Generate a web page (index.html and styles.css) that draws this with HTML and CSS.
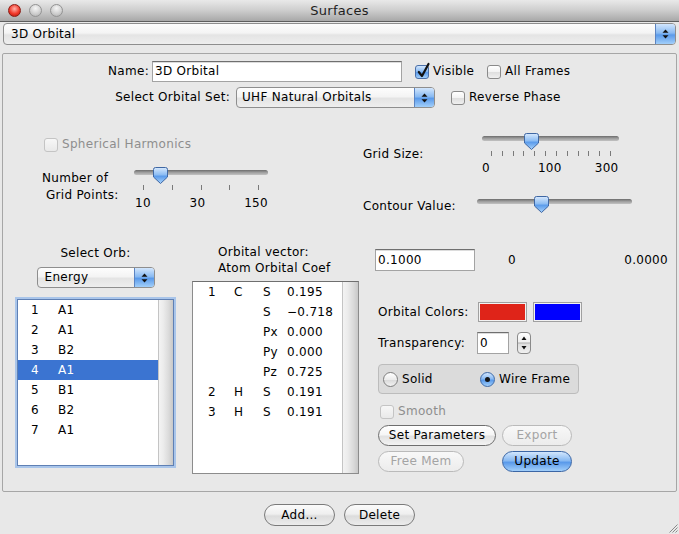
FILE: index.html
```html
<!DOCTYPE html>
<html>
<head>
<meta charset="utf-8">
<title>Surfaces</title>
<link rel="stylesheet" href="styles.css">
</head>
<body>
<svg class="defs" width="0" height="0" aria-hidden="true">
  <defs>
    <linearGradient id="aqua" x1="0" y1="0" x2="0" y2="1">
      <stop offset="0" stop-color="#d8e9fd"/>
      <stop offset="0.45" stop-color="#8dbdf3"/>
      <stop offset="0.55" stop-color="#5c9ceb"/>
      <stop offset="1" stop-color="#a9d3fb"/>
    </linearGradient>
  </defs>
</svg>

<div class="titlebar">
  <div class="lights"><span class="light red"></span><span class="light"></span><span class="light"></span></div>
  <div class="title">Surfaces</div>
  <div></div>
</div>

<div class="popup top-popup">
  <span class="popup-text">3D Orbital</span>
  <span class="popup-arrows"><svg width="7" height="12" viewBox="0 0 7 12"><path d="M3.5 1.5 L6.5 4.8 H0.5Z M0.5 7.2 H6.5 L3.5 10.5Z" fill="#111"/></svg></span>
</div>

<div class="panel">
  <div class="row row-name">
    <div class="lbl-name">Name:</div>
    <div class="field field-name">3D Orbital</div>
    <div class="chk-item chk-visible"><span class="chk checked"><svg width="14" height="17" viewBox="0 0 14 17"><path d="M2.8 10 L6 14 L12.5 2" fill="none" stroke="#111" stroke-width="2.2" stroke-linecap="round" stroke-linejoin="round"/></svg></span><span>Visible</span></div>
    <div class="chk-item"><span class="chk"></span><span>All Frames</span></div>
  </div>

  <div class="row row-set">
    <div class="lbl-set">Select Orbital Set:</div>
    <div class="popup popup-set">
      <span class="popup-text">UHF Natural Orbitals</span>
      <span class="popup-arrows"><svg width="7" height="12" viewBox="0 0 7 12"><path d="M3.5 1.5 L6.5 4.8 H0.5Z M0.5 7.2 H6.5 L3.5 10.5Z" fill="#111"/></svg></span>
    </div>
    <div class="chk-item chk-reverse"><span class="chk"></span><span>Reverse Phase</span></div>
  </div>

  <div class="mid">
    <div class="mid-left">
      <div class="chk-item sph"><span class="chk disabled"></span><span class="dis">Spherical Harmonics</span></div>
      <div class="gp">
        <div class="gp-label"><div>Number of</div><div class="gp-l2">Grid Points:</div></div>
        <div class="sl-gp">
          <div class="slider"><div class="track"></div><svg class="thumb" style="left:19px" width="15" height="17" viewBox="0 0 15 17"><path d="M2.5 0.5 H12.5 Q14.5 0.5 14.5 2.5 V10 L7.5 16.5 L0.5 10 V2.5 Q0.5 0.5 2.5 0.5 Z" fill="url(#aqua)" stroke="#3f67a3"/></svg></div>
          <div class="ticks ticks-gp"><i></i><i></i><i></i><i></i><i></i></div>
          <div class="tick-labels tl-gp"><span>10</span><span>30</span><span>150</span></div>
        </div>
      </div>
    </div>
    <div class="mid-right">
      <div class="gs-row">
        <div class="gs-label">Grid Size:</div>
        <div class="sl-gs">
          <div class="slider"><div class="track"></div><svg class="thumb" style="left:42px" width="15" height="17" viewBox="0 0 15 17"><path d="M2.5 0.5 H12.5 Q14.5 0.5 14.5 2.5 V10 L7.5 16.5 L0.5 10 V2.5 Q0.5 0.5 2.5 0.5 Z" fill="url(#aqua)" stroke="#3f67a3"/></svg></div>
          <div class="ticks ticks-gs"><i></i><i></i><i></i><i></i><i></i><i></i><i></i><i></i><i></i><i></i><i></i><i></i></div>
          <div class="tick-labels tl-gs"><span>0</span><span class="t100">100</span><span class="t300">300</span></div>
        </div>
      </div>
      <div class="ct-row">
        <div class="ct-label">Contour Value:</div>
        <div class="sl-ct">
          <div class="slider"><div class="track"></div><svg class="thumb" style="left:57px" width="15" height="17" viewBox="0 0 15 17"><path d="M2.5 0.5 H12.5 Q14.5 0.5 14.5 2.5 V10 L7.5 16.5 L0.5 10 V2.5 Q0.5 0.5 2.5 0.5 Z" fill="url(#aqua)" stroke="#3f67a3"/></svg></div>
        </div>
      </div>
    </div>
  </div>

  <div class="bot">
    <div class="col1">
      <div class="so-label">Select Orb:</div>
      <div class="popup popup-orb">
        <span class="popup-text">Energy</span>
        <span class="popup-arrows"><svg width="7" height="12" viewBox="0 0 7 12"><path d="M3.5 1.5 L6.5 4.8 H0.5Z M0.5 7.2 H6.5 L3.5 10.5Z" fill="#111"/></svg></span>
      </div>
      <div class="list">
        <div class="list-body">
          <div class="lrow"><span class="lnum">1</span><span>A1</span></div>
          <div class="lrow"><span class="lnum">2</span><span>A1</span></div>
          <div class="lrow"><span class="lnum">3</span><span>B2</span></div>
          <div class="lrow sel"><span class="lnum">4</span><span>A1</span></div>
          <div class="lrow"><span class="lnum">5</span><span>B1</span></div>
          <div class="lrow"><span class="lnum">6</span><span>B2</span></div>
          <div class="lrow"><span class="lnum">7</span><span>A1</span></div>
        </div>
        <div class="scroll"></div>
      </div>
    </div>

    <div class="col2">
      <div class="ov-label"><div>Orbital vector:</div><div>Atom Orbital Coef</div></div>
      <div class="coef">
        <div class="list-body">
          <div class="crow"><span>1</span><span>C</span><span>S</span><span>0.195</span></div>
          <div class="crow"><span></span><span></span><span>S</span><span>&minus;0.718</span></div>
          <div class="crow"><span></span><span></span><span>Px</span><span>0.000</span></div>
          <div class="crow"><span></span><span></span><span>Py</span><span>0.000</span></div>
          <div class="crow"><span></span><span></span><span>Pz</span><span>0.725</span></div>
          <div class="crow"><span>2</span><span>H</span><span>S</span><span>0.191</span></div>
          <div class="crow"><span>3</span><span>H</span><span>S</span><span>0.191</span></div>
        </div>
        <div class="scroll scroll-c"></div>
      </div>
    </div>

    <div class="col3">
      <div class="val-row">
        <div class="field field-val">0.1000</div>
        <span class="zero">0</span>
        <span class="max">0.0000</span>
      </div>
      <div class="oc-row">
        <span class="oc-label">Orbital Colors:</span>
        <span class="swatch sw-red"></span>
        <span class="swatch sw-blue"></span>
      </div>
      <div class="tr-row">
        <span class="tr-label">Transparency:</span>
        <div class="field field-tr">0</div>
        <span class="stepper"><svg width="12" height="20" viewBox="0 0 12 20"><path d="M6 3.5 L8.5 7 H3.5Z M3.5 13 H8.5 L6 16.5Z" fill="#111"/><path d="M0 10 H12" stroke="#b0b0b0" stroke-width="1"/></svg></span>
      </div>
      <div class="radio-box">
        <div class="radio-item ri-solid"><span class="radio"></span><span>Solid</span></div>
        <div class="radio-item"><span class="radio on"><span class="dot"></span></span><span>Wire Frame</span></div>
      </div>
      <div class="chk-item smooth"><span class="chk disabled"></span><span class="dis">Smooth</span></div>
      <div class="btn-row">
        <button class="btn b-setp">Set Parameters</button>
        <button class="btn disabled b-export">Export</button>
      </div>
      <div class="btn-row btn-row2">
        <button class="btn disabled b-free">Free Mem</button>
        <button class="btn b-update">Update</button>
      </div>
    </div>
  </div>
</div>

<div class="bottom-buttons">
  <button class="btn b-bottom">Add...</button>
  <button class="btn b-bottom">Delete</button>
</div>

<svg class="grip" width="10" height="10" viewBox="0 0 10 10"><path d="M9.5 1.5 L1.5 9.5 M9.5 4.5 L4.5 9.5 M9.5 7.5 L7.5 9.5" stroke="#8a8a8a" stroke-width="1"/></svg>
</body>
</html>
```

FILE: styles.css
```css
* { box-sizing: border-box; margin: 0; padding: 0; }
html, body { margin: 0; padding: 0; }
body {
  width: 679px; height: 534px; overflow: hidden;
  background: #e8e8e8;
  font-family: "DejaVu Sans", "Noto Sans", sans-serif;
  font-size: 12px; line-height: 15px; color: #000;
  letter-spacing: 0.3px;
  position: relative;
}
.defs { position: absolute; width: 0; height: 0; }

.titlebar {
  height: 22px;
  display: grid; grid-template-columns: 1fr auto 1fr; align-items: center;
  background: linear-gradient(#e9e9e9, #d0d0d0 45%, #a8a8a8);
  border-bottom: 1px solid #5e5e5e;
}
.lights { display: flex; gap: 8px; padding-left: 8px; }
.light {
  width: 13px; height: 13px; border-radius: 50%;
  background: radial-gradient(circle at 50% 30%, #f6f6f6, #cdcdcd 60%, #aaaaaa);
  border: 1px solid #939393;
}
.light.red {
  background: radial-gradient(circle at 50% 35%, #ffb3aa, #f2392b 55%, #a8140a);
  border-color: #8c1c14;
}
.title { font-size: 13px; color: #1e1e1e; }

.popup {
  display: flex; align-items: stretch; height: 22px;
  border: 1px solid #8e8e8e; border-radius: 4px; overflow: hidden;
  background: linear-gradient(#fdfdfd, #f4f4f4 45%, #e4e4e4 55%, #eeeeee);
}
.popup-text { flex: 1; display: flex; align-items: center; padding-left: 7px; }
.popup-arrows {
  width: 20px; flex: none;
  border-left: 1px solid #5b84c2;
  background: linear-gradient(#d2e6fd, #89baf2 45%, #5a9aea 55%, #a2cffa);
  display: flex; align-items: center; justify-content: center;
}
.top-popup { margin: 1px 3px 0 3px; }

.panel {
  margin: 8px 2px 0 2px; height: 439px;
  border: 1px solid #a6a6a6; border-radius: 2px;
}

.row { display: flex; align-items: center; }
.row-name { margin-top: 7px; height: 21px; }
.lbl-name { width: 146px; text-align: right; }
.field {
  background: #fff; height: 21px;
  border: 1px solid #a3a3a3; border-top-color: #6f6f6f;
  box-shadow: inset 0 1px 0 #dcdcdc;
  display: flex; align-items: center; padding-left: 2px;
}
.field-name { width: 250px; margin-left: 3px; }
.chk-item { display: flex; align-items: center; gap: 4px; }
.chk-visible { margin-left: 13px; width: 72px; }
.chk {
  width: 14px; height: 14px; flex: none; position: relative;
  border: 1px solid #8a8a8a; border-radius: 3px;
  background: linear-gradient(#ffffff, #f2f2f2 50%, #dedede 51%, #efefef);
}
.chk.checked {
  border-color: #4a6fa8;
  background: linear-gradient(#d2e6fd, #89baf2 45%, #5a9aea 55%, #a2cffa);
}
.chk.checked svg { position: absolute; left: 0; top: -4px; }
.chk.disabled { border-color: #c4c4c4; background: linear-gradient(#f7f7f7, #e9e9e9); }
.dis { color: #8e8e8e; }

.row-set { margin-top: 5px; height: 21px; }
.lbl-set { width: 227px; text-align: right; }
.popup-set { width: 199px; height: 21px; margin-left: 6px; }
.popup-set .popup-text { padding-left: 5px; }
.chk-reverse { margin-left: 16px; }

.mid { display: flex; height: 132px; }
.mid-left { width: 359px; }
.sph { margin: 29px 0 0 41px; height: 15px; }
.gp { display: flex; margin-top: 15px; }
.gp-label { width: 92px; margin-left: 39px; margin-top: 3px; line-height: 17px; }
.gp-l2 { padding-left: 4px; }
.sl-gp { width: 134px; }
.slider { position: relative; height: 18px; }
.track {
  position: absolute; left: 0; right: 0; top: 3px; height: 5px; border-radius: 3px;
  background: linear-gradient(#6c6c6c, #9f9f9f 50%, #c2c2c2);
}
.thumb { position: absolute; top: 0; }
.ticks { display: flex; justify-content: space-between; height: 5px; }
.ticks i { display: block; width: 1px; background: #7a7a7a; }
.ticks-gp { padding: 0 9px; }
.tick-labels { display: flex; }
.tl-gp { justify-content: space-between; padding-left: 1px; margin-top: 6px; }

.mid-right { margin-top: 25px; }
.gs-row { display: flex; }
.gs-label { width: 120px; padding-left: 1px; margin-top: 14px; }
.sl-gs { width: 137px; }
.ticks-gs { padding: 0 8px 0 9px; }
.tl-gs { margin-top: 5px; }
.t100 { margin-left: 48px; }
.t300 { margin-left: 33px; }
.ct-row { display: flex; margin-top: 20px; }
.ct-label { width: 115px; padding-left: 1px; margin-top: 3px; }
.sl-ct { width: 155px; }

.bot { display: flex; height: 250px; }
.col1 { margin-left: 13px; width: 159px; display: flex; flex-direction: column; align-items: center; }
.so-label { margin-top: 6px; }
.popup-orb { width: 118px; height: 21px; margin-top: 6px; }
.list {
  margin-top: 11px; width: 157px; height: 167px;
  border: 1px solid #5f80b4; box-shadow: 0 0 0 2px #a9c5ea;
  background: #fff; display: flex;
}
.list-body { flex: 1; }
.scroll {
  width: 15px; flex: none;
  border-left: 1px solid #c4c4c4;
  background: linear-gradient(to right, #f3f3f3, #ececec 30%, #dadada 70%, #c8c8c8);
}
.lrow { height: 20px; display: flex; align-items: center; padding-left: 13px; }
.lnum { width: 27px; }
.lrow.sel { background: #3b74d1; color: #fff; }

.col2 { margin-left: 17px; width: 167px; }
.ov-label { margin-top: 4px; padding-left: 26px; line-height: 16px; }
.coef {
  margin-top: 5px; height: 193px;
  border: 1px solid #8c8c8c; border-top-color: #6f6f6f;
  background: #fff; display: flex;
}
.scroll-c { width: 16px; }
.crow {
  display: grid; grid-template-columns: 26px 29px 24px auto;
  height: 20px; align-items: center; padding-left: 15px;
}

.col3 { margin-left: 16px; width: 293px; }
.val-row { margin-top: 9px; height: 22px; display: flex; align-items: center; }
.field-val { width: 100px; height: 22px; }
.zero { margin-left: 33px; }
.max { margin-left: auto; }
.oc-row { margin-top: 31px; padding-left: 3px; height: 20px; display: flex; align-items: center; }
.oc-label { width: 100px; }
.swatch { width: 49px; height: 20px; border: 1px solid #a0a0a0; box-shadow: inset 0 0 0 1px #f2f2f2; }
.sw-red { background: #df2419; }
.sw-blue { background: #0000ff; margin-left: 6px; }
.tr-row { margin-top: 10px; padding-left: 3px; height: 22px; display: flex; align-items: center; }
.tr-label { width: 99px; }
.field-tr { width: 32px; height: 22px; }
.stepper {
  margin-left: 8px; width: 14px; height: 22px;
  border: 1px solid #8a8a8a; border-radius: 4px;
  background: linear-gradient(#ffffff, #ededed 50%, #dcdcdc 51%, #f0f0f0);
  display: flex; align-items: center; justify-content: center;
}
.radio-box {
  margin: 10px 0 0 3px; width: 201px; height: 30px;
  background: #dbdbdb; border: 1px solid #bcbcbc; border-radius: 4px;
  display: flex; align-items: center; padding-left: 4px;
}
.radio-item { display: flex; align-items: center; gap: 4px; }
.ri-solid { width: 97px; }
.radio {
  width: 15px; height: 15px; border-radius: 50%; flex: none;
  border: 1px solid #7e7e7e;
  background: linear-gradient(#ffffff, #ececec 50%, #d8d8d8 51%, #f2f2f2);
  display: flex; align-items: center; justify-content: center;
}
.radio.on { border-color: #3e6aa8; background: linear-gradient(#d2e6fd, #89baf2 45%, #5a9aea 55%, #a2cffa); }
.dot { width: 5px; height: 5px; border-radius: 50%; background: #161616; }
.smooth { margin: 10px 0 0 5px; height: 15px; }

.btn-row { display: flex; margin-top: 6px; padding-left: 3px; }
.btn-row2 { margin-top: 5px; }
.btn {
  font: inherit; letter-spacing: inherit; color: #000; height: 21px;
  border: 1px solid #6e6e6e; border-radius: 11px;
  background: linear-gradient(#ffffff, #f6f6f6 45%, #e2e2e2 55%, #f3f3f3);
  display: flex; align-items: center; justify-content: center;
}
.btn.disabled { border-color: #bababa; color: #a4a4a4; background: linear-gradient(#f8f8f8, #ececec); }
.b-setp { width: 118px; }
.b-export { width: 70px; margin-left: 6px; }
.b-free { width: 86px; }
.b-update {
  width: 70px; margin-left: 38px; border-color: #3b66a5;
  background: linear-gradient(#d2e6fd, #89baf2 45%, #5a9aea 55%, #a2cffa);
}

.bottom-buttons { display: flex; justify-content: center; gap: 9px; margin-top: 12px; }
.b-bottom { width: 71px; height: 22px; border-color: #7a7a7a; background: linear-gradient(#fbfbfb, #efefef 45%, #dcdcdc 55%, #ececec); }

.grip { position: absolute; right: 1px; bottom: 1px; }
```
